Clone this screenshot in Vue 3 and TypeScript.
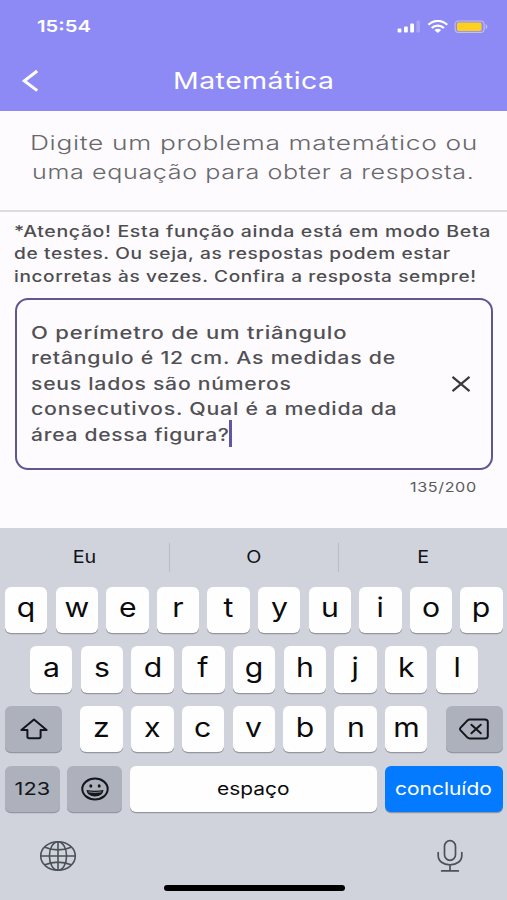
<script setup lang="ts">
import type { Directive } from 'vue'

interface Line {
  text: string
  width: number
}

// Stretches a line of text horizontally to the given width in pixels.
const vFit: Directive<HTMLElement, number> = {
  mounted(el, { value }) {
    const natural = el.offsetWidth
    if (natural > 0) el.style.transform = `scaleX(${value / natural})`
  },
}

const intro: Line[] = [
  { text: 'Digite um problema matemático ou', width: 448 },
  { text: 'uma equação para obter a resposta.', width: 443 },
]
const notice: Line[] = [
  { text: '*Atenção! Esta função ainda está em modo Beta', width: 476.5 },
  { text: 'de testes. Ou seja, as respostas podem estar', width: 436.5 },
  { text: 'incorretas às vezes. Confira a resposta sempre!', width: 463 },
]
const problem: Line[] = [
  { text: 'O perímetro de um triângulo', width: 316 },
  { text: 'retângulo é 12 cm. As medidas de', width: 365 },
  { text: 'seus lados são números', width: 260 },
  { text: 'consecutivos. Qual é a medida da', width: 366 },
  { text: 'área dessa figura?', width: 199 },
]
const suggestions = ['Eu', 'O', 'E']
const rowTop = [...'qwertyuiop']
const rowMiddle = [...'asdfghjkl']
const rowBottom = [...'zxcvbnm']
</script>

<template>
  <div class="screen">
    <header class="header">
      <div class="status">
        <span v-fit="54" class="time">15:54</span>
        <svg class="status-icons" width="92" height="16" viewBox="0 0 92 16">
          <g fill="#fff">
            <rect x="0.6" y="8.6" width="3.8" height="4" rx="1" />
            <rect x="7" y="6.4" width="3.8" height="6.2" rx="1" />
            <rect x="13.2" y="3.6" width="3.8" height="9" rx="1" />
            <rect x="19.4" y="0.6" width="3.6" height="12" rx="1" opacity="0.22" />
          </g>
          <g fill="none" stroke="#fff" stroke-width="2.3">
            <path d="M31.4 4.8C36.7-.4 44.9-.4 50.2 4.8" />
            <path d="M34.7 8C38.2 4.7 43.4 4.7 46.9 8" />
          </g>
          <path d="M37.4 9.9Q40.8 7.4 44.2 9.9L40.8 13Z" fill="#fff" />
          <rect x="58.1" y="1" width="29" height="11.4" rx="3.4" fill="none" stroke="#c4bfe4" stroke-width="1.1" />
          <path d="M88.6 4Q92.2 6.7 88.6 9.4Z" fill="#c4bfe4" />
          <rect x="60" y="2.5" width="24.6" height="8.4" rx="1.6" fill="#fdd01f" />
        </svg>
      </div>
      <div class="nav">
        <svg class="back" width="18" height="24" viewBox="0 0 18 24">
          <path d="M15.2 2L2.4 11.9L15.2 21.6" fill="none" stroke="#fff" stroke-width="3" />
        </svg>
        <h1 v-fit="162" class="title">Matemática</h1>
      </div>
    </header>

    <main class="content">
      <div class="intro">
        <div v-for="line in intro" :key="line.text" class="row">
          <span v-fit="line.width" class="line">{{ line.text }}</span>
        </div>
      </div>
      <div class="notice">
        <div v-for="line in notice" :key="line.text" class="row">
          <span v-fit="line.width" class="line">{{ line.text }}</span>
        </div>
      </div>
      <div class="field">
        <div class="problem">
          <div v-for="line in problem" :key="line.text" class="row">
            <span v-fit="line.width" class="line">{{ line.text }}</span>
          </div>
          <i class="caret"></i>
        </div>
        <svg class="clear" width="20" height="18" viewBox="0 0 20 18">
          <path d="M1.5 1.8L18.5 16.2M18.5 1.8L1.5 16.2" stroke="#39393d" stroke-width="2.2" />
        </svg>
      </div>
      <div class="counter"><span v-fit="67" class="line">135/200</span></div>
    </main>

    <section class="keyboard">
      <div class="suggestions">
        <div v-for="word in suggestions" :key="word" class="suggestion">
          <span>{{ word }}</span>
        </div>
      </div>
      <div class="keys">
        <div class="key-row">
          <button v-for="k in rowTop" :key="k" class="key"><span>{{ k }}</span></button>
        </div>
        <div class="key-row middle">
          <button v-for="k in rowMiddle" :key="k" class="key"><span>{{ k }}</span></button>
        </div>
        <div class="key-row spread">
          <button class="key special shift">
            <svg width="30" height="22" viewBox="0 0 30 22">
              <path d="M15 1.5L27.6 12H21.6V18.6Q21.6 20.3 19.9 20.3H10.1Q8.4 20.3 8.4 18.6V12H2.4Z" fill="none" stroke="#14161b" stroke-width="2" stroke-linejoin="round" />
            </svg>
          </button>
          <div class="letters">
            <button v-for="k in rowBottom" :key="k" class="key"><span>{{ k }}</span></button>
          </div>
          <button class="key special shift">
            <svg width="32" height="22" viewBox="0 0 32 22">
              <g fill="none" stroke="#14161b" stroke-width="2" stroke-linejoin="round" stroke-linecap="round">
                <path d="M11.6 1.6H27Q29.8 1.6 29.8 4.1V17.9Q29.8 20.4 27 20.4H11.6Q10.4 20.4 9.5 19.6L2.4 12.1Q1.5 11 2.4 9.9L9.5 2.4Q10.4 1.6 11.6 1.6Z" />
                <path d="M13.4 6.7L22.8 15.3M22.8 6.7L13.4 15.3" />
              </g>
            </svg>
          </button>
        </div>
        <div class="key-row bottom">
          <button class="key special word numbers"><span v-fit="36">123</span></button>
          <button class="key special">
            <svg width="30" height="26" viewBox="0 0 30 26">
              <ellipse cx="15" cy="13" rx="12.7" ry="10.4" fill="none" stroke="#14161b" stroke-width="2" />
              <ellipse cx="10.8" cy="10" rx="1.5" ry="1.7" fill="#14161b" />
              <ellipse cx="19.2" cy="10" rx="1.5" ry="1.7" fill="#14161b" />
              <path d="M6.4 14Q15 15.6 23.6 14Q22.6 20.4 15 20.4Q7.400 20.4 6.400 14Z" fill="#14161b" />
              <path d="M8.6 15.900Q15 17.100 21.400 15.900" fill="none" stroke="#8f939d" stroke-width="0.900" />
            </svg>
          </button>
          <button class="key word"><span v-fit="73">espaço</span></button>
          <button class="key word done"><span v-fit="97">concluído</span></button>
        </div>
      </div>
      <div class="tools">
        <svg width="38" height="32" viewBox="0 0 38 32">
          <g fill="none" stroke="#4a5157" stroke-width="1.600">
            <ellipse cx="19" cy="16" rx="17.300" ry="14.300" />
            <ellipse cx="19" cy="16" rx="8.600" ry="14.300" />
            <path d="M19 1.700V30.300M1.700 16H36.300M5.800 7.200Q19 12.600 32.200 7.200M5.800 24.800Q19 19.400 32.200 24.800" />
          </g>
        </svg>
        <svg width="28" height="34" viewBox="0 0 28 34">
          <g fill="none" stroke="#4a5157" stroke-width="1.700" stroke-linecap="round">
            <rect x="8.500" y="1.700" width="11" height="19.600" rx="5.500" />
            <path d="M2.200 13.500V16.500C2.200 22.200 7.200 25.800 14 25.800S25.800 22.200 25.800 16.500V13.500M14 25.800V31.600M5.700 31.900H22.300" />
          </g>
        </svg>
      </div>
      <div class="home"></div>
    </section>
  </div>
</template>

<style>
body {
  background: #fdfbfd;
  overflow: hidden;
}
</style>

<style scoped>
.screen {
  width: 507px;
  height: 900px;
  display: flex;
  flex-direction: column;
  background: #fdfbfd;
  font-family: Inter, 'Liberation Sans', sans-serif;
  overflow: hidden;
}
.screen * {
  box-sizing: border-box;
}
svg {
  display: block;
  flex: none;
}
.header {
  height: 111px;
  flex: none;
  background: #8e8af5;
  color: #fff;
}
.status {
  height: 50px;
  display: flex;
  justify-content: space-between;
  padding: 16px 18px 0 37px;
}
.time {
  font-size: 16.5px;
  font-weight: 600;
  line-height: 21px;
  transform-origin: left;
}
.status-icons {
  margin: 4px 0 0 0;
}
.nav {
  height: 61px;
  display: grid;
  grid-template-columns: 60px 1fr 60px;
  align-items: center;
  justify-items: center;
}
.back {
  justify-self: start;
  margin-left: 22px;
}
.title {
  margin: 0;
  padding-top: 1px;
  font-size: 23.5px;
  font-weight: 400;
  line-height: 28px;
  letter-spacing: 0.4px;
}
.content {
  height: 417px;
  flex: none;
}
.line {
  display: inline-block;
  white-space: pre;
  transform-origin: left;
}
.row {
  display: flex;
}
.intro {
  height: 101px;
  padding-top: 18px;
  border-bottom: 2px solid #dcdbde;
  font-size: 20px;
  line-height: 28.8px;
  font-weight: 300;
  letter-spacing: 0.5px;
  color: #68686d;
}
.intro .row {
  justify-content: center;
}
.intro .line {
  transform-origin: center;
}
.notice {
  padding: 9.4px 0 0 14px;
  height: 85.5px;
  font-size: 15.5px;
  line-height: 22.1px;
  font-weight: 500;
  letter-spacing: 0.5px;
  color: #4e4e52;
}
.field {
  display: flex;
  justify-content: space-between;
  align-items: center;
  height: 172px;
  margin: 0 14px 0 14.5px;
  padding: 0 20px 0 14px;
  border: 2.4px solid #61568f;
  border-radius: 13px;
}
.problem {
  position: relative;
  padding-top: 2px;
  font-size: 17px;
  line-height: 25.4px;
  font-weight: 500;
  letter-spacing: 0.6px;
  color: #515155;
}
.caret {
  position: absolute;
  left: 198.5px;
  bottom: 1px;
  width: 2.5px;
  height: 27px;
  background: #6256a4;
}
.counter {
  display: flex;
  justify-content: flex-end;
  padding: 8px 30px 0 0;
  font-size: 13.5px;
  line-height: 18px;
  letter-spacing: 0.5px;
  color: #5a5a5f;
}
.counter .line {
  transform-origin: right;
}
.keyboard {
  flex: 1;
  background: #d0d3dc;
  color: #111317;
}
.suggestions {
  height: 58px;
  display: grid;
  grid-template-columns: 170px 169px 168px;
  align-items: center;
}
.suggestion {
  height: 29px;
  display: flex;
  justify-content: center;
  align-items: center;
  padding-bottom: 2px;
  font-size: 17.5px;
  border-right: 1px solid #b9bcc6;
}
.suggestion:last-child {
  border-right: 0;
}
.suggestion span {
  transform: scaleX(1.13);
}
.keys {
  display: grid;
  gap: 13.2px;
  padding: 0.5px 4.3px 0 5px;
}
.key-row {
  height: 46.5px;
  display: grid;
  grid-template-columns: repeat(10, 1fr);
  gap: 8.3px;
}
.key-row.middle {
  grid-template-columns: repeat(9, 1fr);
  padding: 0 24.6px 0 25px;
}
.key-row.spread {
  display: flex;
  justify-content: space-between;
  gap: 0;
}
.letters {
  width: 347.2px;
  display: grid;
  grid-template-columns: repeat(7, 1fr);
  gap: 8.3px;
}
.key-row.bottom {
  grid-template-columns: 54.5px 55px 246.5px 118px;
  justify-content: space-between;
  gap: 0;
}
.key {
  display: flex;
  align-items: center;
  justify-content: center;
  min-width: 0;
  height: 46.5px;
  margin: 0;
  padding: 0 0 5px;
  border: 0;
  border-radius: 6px;
  background: #fefefe;
  box-shadow: 0 1.3px 0.5px #94979f;
  font-family: inherit;
  font-size: 26.5px;
  font-weight: 400;
  color: #0b0b0c;
}
.key span {
  transform: scaleX(1.14);
}
.key.special {
  padding: 0;
  background: #adb1bc;
  color: #14161b;
}
.shift {
  width: 57px;
}
.key.word {
  font-size: 17.5px;
  padding-bottom: 1px;
}
.key.numbers {
  padding-bottom: 0;
}
.key.done {
  background: #037aff;
  color: #fff;
}
.tools {
  display: flex;
  justify-content: space-between;
  align-items: center;
  height: 34px;
  margin-top: 27px;
  padding: 0 43.5px 0 38.5px;
}
.home {
  width: 181px;
  height: 6px;
  margin: 12px auto 0;
  border-radius: 3px;
  transform: translateX(1px);
  background: #000;
}
</style>
